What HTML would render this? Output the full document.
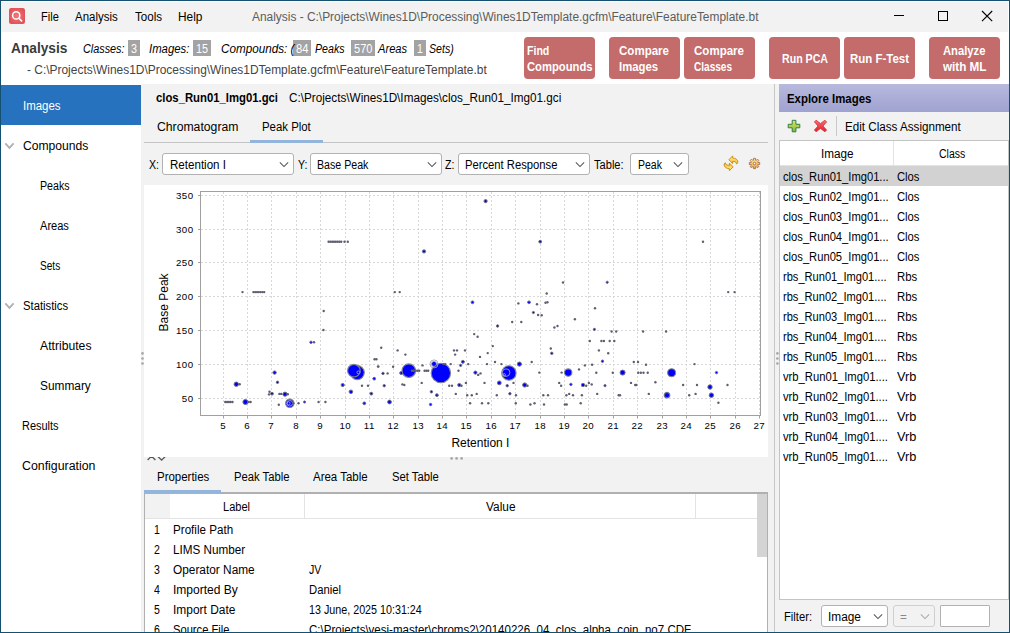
<!DOCTYPE html><html><head><meta charset="utf-8"><title>Analysis</title><style>

html,body{margin:0;padding:0;}
body{width:1010px;height:633px;overflow:hidden;background:#fff;font-family:"Liberation Sans",sans-serif;font-size:12px;position:relative;}
.abs{position:absolute;display:block;}
.t{position:absolute;white-space:nowrap;line-height:16px;height:16px;transform-origin:0 50%;}
.btn{background:#c46b6b;border-radius:4px;}
.badge{background:#a3a3a3;}
.combo{box-sizing:border-box;border:1px solid #b2b2b2;border-radius:3px;background:#fff;}
.combo.dis{background:#f2f2f2;border-color:#cfcfcf;}
.hl{background:#dcdcdc;}

</style></head><body>
<div class="abs" style="left:0;top:0;width:1010px;height:633px;box-sizing:border-box;border:1px solid #14506f;z-index:50;pointer-events:none"></div>
<div class="abs" style="left:1px;top:2px;width:1007px;height:30px;background:#f2f2f2"></div>
<svg class="abs" style="left:9px;top:8px" width="16" height="16" viewBox="0 0 16 16"><defs><radialGradient id="ig" cx="50%" cy="50%" r="65%"><stop offset="0" stop-color="#f27878"/><stop offset="1" stop-color="#dc4a52"/></radialGradient></defs><rect x="0" y="0" width="16" height="16" rx="2.3" fill="url(#ig)"/><circle cx="7.2" cy="7.4" r="3.6" fill="none" stroke="#fff" stroke-width="1.5"/><path d="M9.9 10.2L12.6 12.9" stroke="#fff" stroke-width="1.6" stroke-linecap="round"/></svg>
<svg class="abs" style="left:890px;top:6px" width="110" height="22" viewBox="890 6 110 22"><path d="M894 15.5H904" stroke="#000" stroke-width="1"/><rect x="938.5" y="11.5" width="9" height="9" fill="none" stroke="#000" stroke-width="1"/><path d="M982 11L992.2 21.2M992.2 11L982 21.2" stroke="#000" stroke-width="1.1"/></svg>
<div class="abs btn" style="left:524px;top:37px;width:71px;height:42px"></div>
<div class="abs btn" style="left:609px;top:37px;width:71px;height:42px"></div>
<div class="abs btn" style="left:684px;top:37px;width:71px;height:42px"></div>
<div class="abs btn" style="left:769px;top:37px;width:71px;height:42px"></div>
<div class="abs btn" style="left:844px;top:37px;width:71px;height:42px"></div>
<div class="abs btn" style="left:929px;top:37px;width:71px;height:42px"></div>
<div class="abs badge" style="left:128.0px;top:40px;width:12.0px;height:16px"></div>
<div class="abs badge" style="left:193.0px;top:40px;width:18.0px;height:16px"></div>
<div class="abs badge" style="left:293.0px;top:40px;width:18.0px;height:16px"></div>
<div class="abs badge" style="left:351.0px;top:40px;width:24.0px;height:16px"></div>
<div class="abs badge" style="left:414.0px;top:40px;width:12.0px;height:16px"></div>
<div class="abs" style="left:141px;top:84px;width:868px;height:548px;background:#f2f2f2"></div>
<div class="abs" style="left:1px;top:85px;width:140px;height:40px;background:#2672be"></div>
<svg class="abs" style="left:4px;top:142px" width="11" height="8" viewBox="0 0 11 8"><path d="M1.3 1.4L5.45 5.9L9.6 1.4" fill="none" stroke="#b0b0b0" stroke-width="1.8"/></svg>
<svg class="abs" style="left:4px;top:302px" width="11" height="8" viewBox="0 0 11 8"><path d="M1.3 1.4L5.45 5.9L9.6 1.4" fill="none" stroke="#b0b0b0" stroke-width="1.8"/></svg>
<svg class="abs" style="left:140px;top:350px" width="5" height="18" viewBox="140 350 5 18"><g fill="#a8a8a8"><circle cx="142.5" cy="353.4" r="1.35"/><circle cx="142.5" cy="358.5" r="1.35"/><circle cx="142.5" cy="363.5" r="1.35"/></g></svg>
<div class="abs" style="left:144px;top:142px;width:624px;height:1px;background:#c4c4c4"></div>
<div class="abs" style="left:250px;top:140px;width:73px;height:3px;background:#93b5db"></div>
<div class="abs combo" style="left:162.0px;top:153.0px;width:132.0px;height:22.0px"></div>
<svg class="abs" style="left:278.7px;top:162.2px" width="10" height="6" viewBox="0 0 10 6.5"><path d="M0.5 0.5L5 5L9.5 0.5" fill="none" stroke="#555" stroke-width="1.1"/></svg>
<div class="abs combo" style="left:310.0px;top:153.0px;width:132.0px;height:22.0px"></div>
<svg class="abs" style="left:426.7px;top:162.2px" width="10" height="6" viewBox="0 0 10 6.5"><path d="M0.5 0.5L5 5L9.5 0.5" fill="none" stroke="#555" stroke-width="1.1"/></svg>
<div class="abs combo" style="left:458.0px;top:153.0px;width:132.0px;height:22.0px"></div>
<svg class="abs" style="left:574.5px;top:162.2px" width="10" height="6" viewBox="0 0 10 6.5"><path d="M0.5 0.5L5 5L9.5 0.5" fill="none" stroke="#555" stroke-width="1.1"/></svg>
<div class="abs combo" style="left:630.0px;top:153.0px;width:59.0px;height:22.0px"></div>
<svg class="abs" style="left:673.1px;top:162.2px" width="10" height="6" viewBox="0 0 10 6.5"><path d="M0.5 0.5L5 5L9.5 0.5" fill="none" stroke="#555" stroke-width="1.1"/></svg>
<svg class="abs" style="left:723px;top:155px" width="17" height="17" viewBox="0 0 17 17"><defs><linearGradient id="rg" x1="0" y1="0" x2="0" y2="1"><stop offset="0" stop-color="#fff2a8"/><stop offset="1" stop-color="#f2b722"/></linearGradient></defs><g fill="url(#rg)" stroke="#c88a0c" stroke-width="0.9" stroke-linejoin="round"><path d="M5.9 4.8L9.6 0.9L9.6 3C12.6 3 15 4.6 15 7.6L13.6 8.9C13.2 7.1 11.8 6.3 9.6 6.4L9.6 8.6Z"/><path d="M5.9 4.8L9.6 0.9L9.6 3C12.6 3 15 4.6 15 7.6L13.6 8.9C13.2 7.1 11.8 6.3 9.6 6.4L9.6 8.6Z" transform="rotate(180 8 8.35)"/></g></svg>
<svg class="abs" style="left:748px;top:157px" width="13" height="13" viewBox="0 0 13 13"><defs><linearGradient id="gg" x1="0" y1="0" x2="0" y2="1"><stop offset="0" stop-color="#fff09a"/><stop offset="1" stop-color="#f0a63e"/></linearGradient></defs><path d="M5.60 3.12L5.45 1.31L7.55 1.31L7.40 3.12L8.26 3.47L9.43 2.08L10.92 3.57L9.53 4.74L9.88 5.60L11.69 5.45L11.69 7.55L9.88 7.40L9.53 8.26L10.92 9.43L9.43 10.92L8.26 9.53L7.40 9.88L7.55 11.69L5.45 11.69L5.60 9.88L4.74 9.53L3.57 10.92L2.08 9.43L3.47 8.26L3.12 7.40L1.31 7.55L1.31 5.45L3.12 5.60L3.47 4.74L2.08 3.57L3.57 2.08L4.74 3.47Z" fill="url(#gg)" stroke="#a8705c" stroke-width="0.9" stroke-linejoin="round"/><circle cx="6.5" cy="6.5" r="1.25" fill="#fff" stroke="#7a5a50" stroke-width="0.8"/></svg>
<svg class="abs" style="left:144px;top:185px" width="624" height="272" viewBox="144 185 624 272">
<rect x="144" y="185" width="624" height="272" fill="#fff"/>
<path d="M223.5 192V415M247.5 192V415M271.5 192V415M296.5 192V415M320.5 192V415M345.5 192V415M369.5 192V415M393.5 192V415M418.5 192V415M442.5 192V415M466.5 192V415M491.5 192V415M515.5 192V415M540.5 192V415M564.5 192V415M588.5 192V415M613.5 192V415M637.5 192V415M662.5 192V415M686.5 192V415M710.5 192V415M735.5 192V415M759.5 192V415M201 195.5H760M201 229.5H760M201 262.5H760M201 296.5H760M201 330.5H760M201 364.5H760M201 398.5H760" stroke="#d8d8d8" stroke-width="1" stroke-dasharray="2 2" fill="none"/>
<circle cx="357.3" cy="372.6" r="7.0" fill="#0000ff" stroke="#84848e" stroke-width="1.1"/>
<circle cx="353.9" cy="370.7" r="6.3" fill="#0000ff" stroke="#84848e" stroke-width="1.1"/>
<circle cx="408.8" cy="370.7" r="6.8" fill="#0000ff" stroke="#84848e" stroke-width="1.1"/>
<circle cx="440.9" cy="373.0" r="9.7" fill="#0000ff" stroke="#84848e" stroke-width="1.1"/>
<circle cx="508.9" cy="373.0" r="7.2" fill="#0000ff" stroke="#84848e" stroke-width="1.1"/>
<circle cx="568.2" cy="372.6" r="3.7" fill="#0000ff" stroke="#84848e" stroke-width="1.1"/>
<circle cx="671.6" cy="372.8" r="4.0" fill="#0000ff" stroke="#84848e" stroke-width="1.1"/>
<circle cx="289.8" cy="403.3" r="4.2" fill="#0000ff" stroke="#84848e" stroke-width="1.1"/>
<circle cx="434" cy="363.9" r="2.5" fill="#0000ff"/>
<circle cx="358.5" cy="372.4" r="1.5" fill="none" stroke="#a4a4b4" stroke-width="0.9"/>
<circle cx="434.0" cy="363.9" r="4.0" fill="none" stroke="#a4a4b4" stroke-width="0.9"/>
<circle cx="434.0" cy="363.9" r="2.5" fill="none" stroke="#a4a4b4" stroke-width="0.9"/>
<circle cx="506.1" cy="372.6" r="3.8" fill="none" stroke="#a4a4b4" stroke-width="0.9"/>
<circle cx="504.2" cy="374.9" r="1.3" fill="none" stroke="#a4a4b4" stroke-width="0.9"/>
<circle cx="289.8" cy="403.3" r="2.8" fill="none" stroke="#a4a4b4" stroke-width="0.9"/>
<circle cx="288.5" cy="403.3" r="1.6" fill="none" stroke="#a4a4b4" stroke-width="0.9"/>
<circle cx="667.0" cy="395.2" r="3.1" fill="none" stroke="#a4a4b4" stroke-width="0.9"/>
<circle cx="622.6" cy="372.6" r="1.5" fill="none" stroke="#a4a4b4" stroke-width="0.9"/>
<circle cx="323.7" cy="311.0" r="1.2" fill="#5e5e70"/>
<circle cx="323.4" cy="330.0" r="1.2" fill="#5e5e70"/>
<circle cx="311.0" cy="342.3" r="1.2" fill="#0000ff" stroke="#70707e" stroke-width="1"/>
<circle cx="314.0" cy="342.3" r="1.2" fill="#5e5e70"/>
<circle cx="381.2" cy="347.8" r="1.2" fill="#5e5e70"/>
<circle cx="374.6" cy="359.2" r="1.2" fill="#5e5e70"/>
<circle cx="376.4" cy="359.2" r="1.2" fill="#5e5e70"/>
<circle cx="378.2" cy="366.6" r="1.4" fill="#5e5e70"/>
<circle cx="383.0" cy="373.4" r="1.2" fill="#0000ff" stroke="#70707e" stroke-width="1"/>
<circle cx="374.2" cy="378.7" r="1.4" fill="#0000ff" stroke="#70707e" stroke-width="1"/>
<circle cx="274.6" cy="372.6" r="1.7" fill="#0000ff" stroke="#70707e" stroke-width="1"/>
<circle cx="277.5" cy="382.3" r="1.2" fill="#0000ff" stroke="#70707e" stroke-width="1"/>
<circle cx="236.3" cy="384.2" r="2.2" fill="#0000ff" stroke="#70707e" stroke-width="1"/>
<circle cx="239.7" cy="384.2" r="1.2" fill="#5e5e70"/>
<circle cx="342.7" cy="385.0" r="1.6" fill="#0000ff" stroke="#70707e" stroke-width="1"/>
<circle cx="362.0" cy="385.7" r="1.2" fill="#5e5e70"/>
<circle cx="368.0" cy="385.7" r="1.2" fill="#5e5e70"/>
<circle cx="384.2" cy="385.7" r="1.2" fill="#0000ff" stroke="#70707e" stroke-width="1"/>
<circle cx="350.9" cy="391.8" r="1.8" fill="#0000ff" stroke="#70707e" stroke-width="1"/>
<circle cx="371.3" cy="393.7" r="1.4" fill="#0000ff" stroke="#70707e" stroke-width="1"/>
<circle cx="269.5" cy="391.8" r="1.2" fill="#5e5e70"/>
<circle cx="269.0" cy="394.4" r="1.2" fill="#5e5e70"/>
<circle cx="272.0" cy="393.7" r="1.4" fill="#0000ff" stroke="#70707e" stroke-width="1"/>
<circle cx="279.4" cy="393.9" r="1.2" fill="#5e5e70"/>
<circle cx="281.2" cy="393.9" r="1.2" fill="#5e5e70"/>
<circle cx="285.0" cy="394.2" r="2.1" fill="#0000ff" stroke="#70707e" stroke-width="1"/>
<circle cx="287.8" cy="394.2" r="1.2" fill="#5e5e70"/>
<circle cx="225.3" cy="402.0" r="1.2" fill="#5e5e70"/>
<circle cx="227.1" cy="402.0" r="1.2" fill="#5e5e70"/>
<circle cx="228.9" cy="402.0" r="1.2" fill="#5e5e70"/>
<circle cx="230.7" cy="402.0" r="1.2" fill="#5e5e70"/>
<circle cx="232.5" cy="402.0" r="1.2" fill="#5e5e70"/>
<circle cx="245.4" cy="402.0" r="2.5" fill="#0000ff" stroke="#70707e" stroke-width="1"/>
<circle cx="248.7" cy="402.0" r="1.2" fill="#5e5e70"/>
<circle cx="250.6" cy="402.0" r="1.2" fill="#5e5e70"/>
<circle cx="293.3" cy="403.3" r="1.2" fill="#5e5e70"/>
<circle cx="278.8" cy="404.7" r="1.2" fill="#5e5e70"/>
<circle cx="298.5" cy="403.3" r="1.2" fill="#5e5e70"/>
<circle cx="304.6" cy="402.0" r="1.1" fill="#0000ff" stroke="#70707e" stroke-width="1"/>
<circle cx="318.6" cy="402.0" r="1.2" fill="#5e5e70"/>
<circle cx="325.4" cy="402.0" r="1.2" fill="#5e5e70"/>
<circle cx="364.3" cy="403.3" r="1.4" fill="#0000ff" stroke="#70707e" stroke-width="1"/>
<circle cx="472.5" cy="302.3" r="1.4" fill="#0000ff" stroke="#70707e" stroke-width="1"/>
<circle cx="518.4" cy="303.4" r="1.2" fill="#5e5e70"/>
<circle cx="529.0" cy="302.3" r="1.4" fill="#0000ff" stroke="#70707e" stroke-width="1"/>
<circle cx="537.0" cy="304.2" r="1.2" fill="#5e5e70"/>
<circle cx="545.5" cy="302.8" r="1.2" fill="#5e5e70"/>
<circle cx="547.4" cy="302.3" r="1.2" fill="#5e5e70"/>
<circle cx="533.4" cy="312.5" r="1.1" fill="#0000ff" stroke="#70707e" stroke-width="1"/>
<circle cx="538.1" cy="315.0" r="1.2" fill="#5e5e70"/>
<circle cx="541.7" cy="315.2" r="1.2" fill="#5e5e70"/>
<circle cx="512.2" cy="322.0" r="1.2" fill="#5e5e70"/>
<circle cx="521.3" cy="322.0" r="1.2" fill="#5e5e70"/>
<circle cx="497.6" cy="326.0" r="1.2" fill="#0000ff" stroke="#70707e" stroke-width="1"/>
<circle cx="554.4" cy="327.5" r="1.2" fill="#5e5e70"/>
<circle cx="557.5" cy="326.0" r="1.2" fill="#5e5e70"/>
<circle cx="474.2" cy="334.1" r="1.2" fill="#5e5e70"/>
<circle cx="477.6" cy="336.8" r="1.2" fill="#5e5e70"/>
<circle cx="492.8" cy="346.1" r="1.2" fill="#5e5e70"/>
<circle cx="397.6" cy="350.4" r="1.2" fill="#5e5e70"/>
<circle cx="405.4" cy="354.6" r="1.2" fill="#5e5e70"/>
<circle cx="454.0" cy="350.4" r="1.2" fill="#5e5e70"/>
<circle cx="457.0" cy="350.4" r="1.2" fill="#5e5e70"/>
<circle cx="465.0" cy="350.4" r="1.2" fill="#5e5e70"/>
<circle cx="455.1" cy="354.6" r="1.2" fill="#5e5e70"/>
<circle cx="487.7" cy="353.1" r="1.2" fill="#5e5e70"/>
<circle cx="480.0" cy="356.9" r="1.2" fill="#5e5e70"/>
<circle cx="550.8" cy="348.5" r="1.2" fill="#5e5e70"/>
<circle cx="551.8" cy="353.3" r="1.2" fill="#0000ff" stroke="#70707e" stroke-width="1"/>
<circle cx="462.9" cy="361.8" r="1.5" fill="#0000ff" stroke="#70707e" stroke-width="1"/>
<circle cx="468.2" cy="364.1" r="1.2" fill="#5e5e70"/>
<circle cx="460.6" cy="365.4" r="1.1" fill="#0000ff" stroke="#70707e" stroke-width="1"/>
<circle cx="487.0" cy="364.1" r="1.2" fill="#5e5e70"/>
<circle cx="495.0" cy="362.0" r="1.2" fill="#5e5e70"/>
<circle cx="501.4" cy="364.1" r="1.2" fill="#5e5e70"/>
<circle cx="519.4" cy="364.1" r="2.1" fill="#0000ff" stroke="#70707e" stroke-width="1"/>
<circle cx="531.7" cy="362.0" r="1.2" fill="#5e5e70"/>
<circle cx="443.5" cy="364.1" r="1.2" fill="#5e5e70"/>
<circle cx="445.3" cy="364.1" r="1.2" fill="#5e5e70"/>
<circle cx="450.7" cy="364.1" r="1.2" fill="#5e5e70"/>
<circle cx="422.5" cy="365.4" r="1.2" fill="#5e5e70"/>
<circle cx="393.1" cy="366.7" r="1.2" fill="#5e5e70"/>
<circle cx="412.0" cy="370.7" r="1.2" fill="#5e5e70"/>
<circle cx="413.8" cy="370.7" r="1.2" fill="#5e5e70"/>
<circle cx="415.6" cy="370.7" r="1.2" fill="#5e5e70"/>
<circle cx="417.4" cy="370.7" r="1.2" fill="#5e5e70"/>
<circle cx="419.2" cy="370.7" r="1.2" fill="#5e5e70"/>
<circle cx="424.6" cy="370.7" r="1.2" fill="#5e5e70"/>
<circle cx="426.4" cy="370.7" r="1.2" fill="#5e5e70"/>
<circle cx="428.2" cy="370.7" r="1.2" fill="#5e5e70"/>
<circle cx="458.5" cy="370.7" r="1.2" fill="#5e5e70"/>
<circle cx="387.6" cy="373.4" r="1.2" fill="#5e5e70"/>
<circle cx="475.4" cy="372.6" r="1.6" fill="#0000ff" stroke="#70707e" stroke-width="1"/>
<circle cx="401.2" cy="373.0" r="1.5" fill="#0000ff" stroke="#70707e" stroke-width="1"/>
<circle cx="478.2" cy="374.9" r="1.2" fill="#5e5e70"/>
<circle cx="480.5" cy="373.4" r="1.2" fill="#5e5e70"/>
<circle cx="539.3" cy="372.6" r="1.2" fill="#5e5e70"/>
<circle cx="561.6" cy="372.6" r="1.2" fill="#5e5e70"/>
<circle cx="499.3" cy="382.9" r="1.9" fill="#0000ff" stroke="#70707e" stroke-width="1"/>
<circle cx="513.5" cy="382.9" r="1.2" fill="#5e5e70"/>
<circle cx="484.5" cy="382.9" r="1.2" fill="#5e5e70"/>
<circle cx="465.9" cy="382.9" r="1.2" fill="#5e5e70"/>
<circle cx="421.7" cy="382.9" r="1.2" fill="#5e5e70"/>
<circle cx="402.4" cy="384.4" r="1.2" fill="#5e5e70"/>
<circle cx="404.3" cy="385.0" r="1.2" fill="#5e5e70"/>
<circle cx="449.2" cy="385.7" r="1.2" fill="#5e5e70"/>
<circle cx="452.0" cy="385.7" r="1.2" fill="#5e5e70"/>
<circle cx="459.3" cy="385.0" r="1.6" fill="#0000ff" stroke="#70707e" stroke-width="1"/>
<circle cx="461.5" cy="385.7" r="1.2" fill="#5e5e70"/>
<circle cx="507.2" cy="385.7" r="1.2" fill="#0000ff" stroke="#70707e" stroke-width="1"/>
<circle cx="524.7" cy="385.0" r="2.1" fill="#0000ff" stroke="#70707e" stroke-width="1"/>
<circle cx="527.5" cy="385.7" r="1.2" fill="#5e5e70"/>
<circle cx="559.2" cy="382.9" r="1.2" fill="#5e5e70"/>
<circle cx="561.1" cy="385.7" r="1.2" fill="#5e5e70"/>
<circle cx="431.4" cy="391.8" r="1.2" fill="#0000ff" stroke="#70707e" stroke-width="1"/>
<circle cx="436.9" cy="395.2" r="1.4" fill="#0000ff" stroke="#70707e" stroke-width="1"/>
<circle cx="455.8" cy="393.9" r="1.2" fill="#5e5e70"/>
<circle cx="467.2" cy="395.2" r="1.2" fill="#5e5e70"/>
<circle cx="471.8" cy="395.2" r="1.2" fill="#5e5e70"/>
<circle cx="476.7" cy="393.9" r="1.2" fill="#5e5e70"/>
<circle cx="496.8" cy="395.2" r="1.2" fill="#5e5e70"/>
<circle cx="509.9" cy="393.7" r="1.2" fill="#0000ff" stroke="#70707e" stroke-width="1"/>
<circle cx="516.0" cy="395.2" r="1.2" fill="#5e5e70"/>
<circle cx="543.3" cy="395.2" r="1.2" fill="#5e5e70"/>
<circle cx="548.0" cy="395.2" r="1.2" fill="#5e5e70"/>
<circle cx="566.4" cy="395.2" r="1.2" fill="#5e5e70"/>
<circle cx="569.2" cy="393.9" r="1.2" fill="#5e5e70"/>
<circle cx="389.5" cy="402.0" r="1.9" fill="#0000ff" stroke="#70707e" stroke-width="1"/>
<circle cx="430.6" cy="404.5" r="1.2" fill="#0000ff" stroke="#70707e" stroke-width="1"/>
<circle cx="470.1" cy="403.3" r="1.2" fill="#5e5e70"/>
<circle cx="482.0" cy="403.3" r="1.2" fill="#5e5e70"/>
<circle cx="488.3" cy="403.3" r="1.2" fill="#5e5e70"/>
<circle cx="515.8" cy="403.3" r="1.2" fill="#5e5e70"/>
<circle cx="530.4" cy="404.5" r="1.2" fill="#5e5e70"/>
<circle cx="534.5" cy="403.3" r="1.2" fill="#5e5e70"/>
<circle cx="544.0" cy="404.5" r="1.2" fill="#5e5e70"/>
<circle cx="564.9" cy="404.5" r="1.2" fill="#5e5e70"/>
<circle cx="566.7" cy="404.5" r="1.2" fill="#5e5e70"/>
<circle cx="595.0" cy="308.3" r="1.2" fill="#5e5e70"/>
<circle cx="574.9" cy="319.2" r="1.2" fill="#5e5e70"/>
<circle cx="594.4" cy="329.4" r="1.1" fill="#0000ff" stroke="#70707e" stroke-width="1"/>
<circle cx="611.6" cy="331.5" r="1.2" fill="#5e5e70"/>
<circle cx="616.2" cy="331.5" r="1.2" fill="#5e5e70"/>
<circle cx="643.1" cy="331.5" r="1.2" fill="#5e5e70"/>
<circle cx="666.1" cy="331.5" r="1.2" fill="#5e5e70"/>
<circle cx="589.8" cy="341.0" r="1.2" fill="#5e5e70"/>
<circle cx="601.4" cy="341.0" r="1.2" fill="#5e5e70"/>
<circle cx="603.9" cy="341.0" r="1.2" fill="#5e5e70"/>
<circle cx="609.7" cy="341.0" r="1.2" fill="#5e5e70"/>
<circle cx="614.3" cy="341.0" r="1.2" fill="#5e5e70"/>
<circle cx="598.9" cy="350.4" r="1.2" fill="#5e5e70"/>
<circle cx="608.2" cy="353.3" r="1.2" fill="#5e5e70"/>
<circle cx="602.5" cy="361.2" r="1.2" fill="#0000ff" stroke="#70707e" stroke-width="1"/>
<circle cx="633.8" cy="362.0" r="1.2" fill="#5e5e70"/>
<circle cx="638.0" cy="362.0" r="1.2" fill="#5e5e70"/>
<circle cx="646.0" cy="364.8" r="1.2" fill="#5e5e70"/>
<circle cx="694.5" cy="364.1" r="1.2" fill="#5e5e70"/>
<circle cx="584.9" cy="365.4" r="1.2" fill="#5e5e70"/>
<circle cx="592.1" cy="364.8" r="1.2" fill="#5e5e70"/>
<circle cx="579.0" cy="369.4" r="1.2" fill="#5e5e70"/>
<circle cx="596.3" cy="372.8" r="1.2" fill="#5e5e70"/>
<circle cx="612.8" cy="372.8" r="1.2" fill="#5e5e70"/>
<circle cx="622.6" cy="372.6" r="2.5" fill="#0000ff" stroke="#70707e" stroke-width="1"/>
<circle cx="638.2" cy="372.8" r="1.2" fill="#5e5e70"/>
<circle cx="640.8" cy="372.8" r="1.2" fill="#5e5e70"/>
<circle cx="643.5" cy="372.8" r="1.2" fill="#5e5e70"/>
<circle cx="647.7" cy="372.8" r="1.2" fill="#5e5e70"/>
<circle cx="716.5" cy="372.6" r="1.2" fill="#0000ff" stroke="#70707e" stroke-width="1"/>
<circle cx="570.9" cy="384.4" r="1.2" fill="#0000ff" stroke="#70707e" stroke-width="1"/>
<circle cx="583.0" cy="385.0" r="1.7" fill="#0000ff" stroke="#70707e" stroke-width="1"/>
<circle cx="586.2" cy="385.7" r="1.2" fill="#5e5e70"/>
<circle cx="588.9" cy="382.9" r="1.2" fill="#5e5e70"/>
<circle cx="591.7" cy="384.4" r="1.2" fill="#5e5e70"/>
<circle cx="605.0" cy="385.7" r="1.1" fill="#0000ff" stroke="#70707e" stroke-width="1"/>
<circle cx="631.0" cy="382.9" r="1.2" fill="#5e5e70"/>
<circle cx="635.2" cy="385.0" r="1.2" fill="#5e5e70"/>
<circle cx="636.3" cy="385.0" r="1.2" fill="#5e5e70"/>
<circle cx="655.4" cy="382.3" r="1.2" fill="#5e5e70"/>
<circle cx="683.1" cy="385.0" r="1.2" fill="#5e5e70"/>
<circle cx="697.0" cy="385.0" r="1.2" fill="#5e5e70"/>
<circle cx="710.0" cy="387.0" r="2.2" fill="#0000ff" stroke="#70707e" stroke-width="1"/>
<circle cx="727.5" cy="385.0" r="1.2" fill="#5e5e70"/>
<circle cx="573.0" cy="395.2" r="1.2" fill="#5e5e70"/>
<circle cx="581.9" cy="395.2" r="1.2" fill="#5e5e70"/>
<circle cx="597.2" cy="393.9" r="1.2" fill="#5e5e70"/>
<circle cx="618.7" cy="395.2" r="1.2" fill="#5e5e70"/>
<circle cx="620.0" cy="395.2" r="1.2" fill="#5e5e70"/>
<circle cx="648.8" cy="393.9" r="1.2" fill="#5e5e70"/>
<circle cx="667.0" cy="395.2" r="2.6" fill="#0000ff" stroke="#70707e" stroke-width="1"/>
<circle cx="689.2" cy="395.2" r="1.2" fill="#5e5e70"/>
<circle cx="695.6" cy="393.9" r="1.2" fill="#5e5e70"/>
<circle cx="711.4" cy="395.2" r="2.2" fill="#0000ff" stroke="#70707e" stroke-width="1"/>
<circle cx="718.4" cy="402.8" r="1.2" fill="#5e5e70"/>
<circle cx="580.7" cy="403.3" r="1.2" fill="#5e5e70"/>
<circle cx="485.6" cy="201.1" r="1.6" fill="#0000ff" stroke="#70707e" stroke-width="1"/>
<circle cx="540.2" cy="241.7" r="1.4" fill="#0000ff" stroke="#70707e" stroke-width="1"/>
<circle cx="424.0" cy="251.4" r="1.6" fill="#0000ff" stroke="#70707e" stroke-width="1"/>
<circle cx="394.8" cy="292.1" r="1.2" fill="#5e5e70"/>
<circle cx="399.7" cy="292.1" r="1.2" fill="#5e5e70"/>
<circle cx="563.0" cy="282.5" r="1.2" fill="#5e5e70"/>
<circle cx="546.7" cy="293.5" r="1.2" fill="#5e5e70"/>
<circle cx="703.0" cy="241.8" r="1.2" fill="#5e5e70"/>
<circle cx="607.2" cy="282.3" r="1.1" fill="#0000ff" stroke="#70707e" stroke-width="1"/>
<circle cx="728.2" cy="292.1" r="1.2" fill="#5e5e70"/>
<circle cx="734.6" cy="292.1" r="1.2" fill="#5e5e70"/>
<circle cx="328.6" cy="241.8" r="1.2" fill="#5e5e70"/>
<circle cx="330.4" cy="241.8" r="1.2" fill="#5e5e70"/>
<circle cx="332.2" cy="241.8" r="1.2" fill="#5e5e70"/>
<circle cx="334.0" cy="241.8" r="1.2" fill="#5e5e70"/>
<circle cx="335.8" cy="241.8" r="1.2" fill="#5e5e70"/>
<circle cx="337.6" cy="241.8" r="1.2" fill="#5e5e70"/>
<circle cx="339.4" cy="241.8" r="1.2" fill="#5e5e70"/>
<circle cx="341.2" cy="241.8" r="1.2" fill="#5e5e70"/>
<circle cx="344.5" cy="241.8" r="1.2" fill="#5e5e70"/>
<circle cx="347.8" cy="241.8" r="1.2" fill="#5e5e70"/>
<circle cx="242.5" cy="292.1" r="1.2" fill="#5e5e70"/>
<circle cx="253.4" cy="292.1" r="1.2" fill="#5e5e70"/>
<circle cx="255.2" cy="292.1" r="1.2" fill="#5e5e70"/>
<circle cx="257.0" cy="292.1" r="1.2" fill="#5e5e70"/>
<circle cx="258.8" cy="292.1" r="1.2" fill="#5e5e70"/>
<circle cx="260.6" cy="292.1" r="1.2" fill="#5e5e70"/>
<circle cx="262.4" cy="292.1" r="1.2" fill="#5e5e70"/>
<circle cx="264.2" cy="292.1" r="1.2" fill="#5e5e70"/>
<rect x="200.5" y="191.5" width="560" height="224" fill="none" stroke="#a0a0a0" stroke-width="1"/>
<path d="M223.5 415.5v3M247.5 415.5v3M271.5 415.5v3M296.5 415.5v3M320.5 415.5v3M345.5 415.5v3M369.5 415.5v3M393.5 415.5v3M418.5 415.5v3M442.5 415.5v3M466.5 415.5v3M491.5 415.5v3M515.5 415.5v3M540.5 415.5v3M564.5 415.5v3M588.5 415.5v3M613.5 415.5v3M637.5 415.5v3M662.5 415.5v3M686.5 415.5v3M710.5 415.5v3M735.5 415.5v3M759.5 415.5v3M198 195.5h3M198 229.5h3M198 262.5h3M198 296.5h3M198 330.5h3M198 364.5h3M198 398.5h3" stroke="#a0a0a0" stroke-width="1" fill="none"/>
<g font-family='"Liberation Sans", sans-serif' font-size="9.7" fill="#000" letter-spacing="0.5">
<text x="223.3" y="429" text-anchor="middle">5</text>
<text x="247.3" y="429" text-anchor="middle">6</text>
<text x="271.3" y="429" text-anchor="middle">7</text>
<text x="296.3" y="429" text-anchor="middle">8</text>
<text x="320.3" y="429" text-anchor="middle">9</text>
<text x="345.3" y="429" text-anchor="middle">10</text>
<text x="369.3" y="429" text-anchor="middle">11</text>
<text x="393.3" y="429" text-anchor="middle">12</text>
<text x="418.3" y="429" text-anchor="middle">13</text>
<text x="442.3" y="429" text-anchor="middle">14</text>
<text x="466.3" y="429" text-anchor="middle">15</text>
<text x="491.3" y="429" text-anchor="middle">16</text>
<text x="515.3" y="429" text-anchor="middle">17</text>
<text x="540.3" y="429" text-anchor="middle">18</text>
<text x="564.3" y="429" text-anchor="middle">19</text>
<text x="588.3" y="429" text-anchor="middle">20</text>
<text x="613.3" y="429" text-anchor="middle">21</text>
<text x="637.3" y="429" text-anchor="middle">22</text>
<text x="662.3" y="429" text-anchor="middle">23</text>
<text x="686.3" y="429" text-anchor="middle">24</text>
<text x="710.3" y="429" text-anchor="middle">25</text>
<text x="735.3" y="429" text-anchor="middle">26</text>
<text x="759.3" y="429" text-anchor="middle">27</text>
<text x="193.6" y="199.0" text-anchor="end">350</text>
<text x="193.6" y="233.0" text-anchor="end">300</text>
<text x="193.6" y="266.0" text-anchor="end">250</text>
<text x="193.6" y="300.0" text-anchor="end">200</text>
<text x="193.6" y="334.0" text-anchor="end">150</text>
<text x="193.6" y="368.0" text-anchor="end">100</text>
<text x="193.6" y="402.0" text-anchor="end">50</text>
</g>
<g font-family='"Liberation Sans", sans-serif' font-size="12" fill="#000">
<text x="480.4" y="447.2" text-anchor="middle">Retention I</text>
<text transform="translate(168.3 302.4) rotate(-90)" text-anchor="middle">Base Peak</text>
</g>
</svg>
<svg class="abs" style="left:146px;top:457px;overflow:hidden" width="22" height="5" viewBox="146 457 22 5"><path d="M147.6 460L151.5 456.1L155.4 460M157.8 456.4L161.6 460.1L165.4 456.4" fill="none" stroke="#555" stroke-width="1.3"/></svg>
<svg class="abs" style="left:449px;top:456px" width="16" height="5" viewBox="449 456 16 5"><g fill="#a8a8a8"><circle cx="451.6" cy="458.4" r="1.35"/><circle cx="456.6" cy="458.4" r="1.35"/><circle cx="461.6" cy="458.4" r="1.35"/></g></svg>
<div class="abs" style="left:144px;top:490px;width:77px;height:3px;background:#93b5db;z-index:5"></div>
<div class="abs" style="left:144px;top:492px;width:624px;height:141px;background:#fff;box-sizing:border-box;border:1px solid #b0b0b0;border-top:2px solid #b0b0b0"></div>
<div class="abs" style="left:145px;top:494px;width:25px;height:24px;background:#f2f2f2"></div>
<div class="abs" style="left:145px;top:518px;width:612px;height:1px;background:#e3e3e3"></div>
<div class="abs" style="left:304px;top:494px;width:1px;height:24px;background:#e3e3e3"></div>
<div class="abs" style="left:695px;top:494px;width:1px;height:24px;background:#e3e3e3"></div>
<div class="abs" style="left:757px;top:494px;width:10px;height:63px;background:#d4d4d4"></div>
<div class="abs" style="left:774px;top:84px;width:1px;height:548px;background:#c6c6c6"></div>
<svg class="abs" style="left:775px;top:350px" width="4" height="18" viewBox="775 350 4 18"><g fill="#a8a8a8"><circle cx="777.4" cy="353.4" r="1.35"/><circle cx="777.4" cy="358.5" r="1.35"/><circle cx="777.4" cy="363.5" r="1.35"/></g></svg>
<div class="abs" style="left:779px;top:84px;width:230px;height:28px;background:linear-gradient(#b7b9dd,#a0a2d0)"></div>
<svg class="abs" style="left:787px;top:119px" width="14" height="14" viewBox="0 0 14 14"><defs><linearGradient id="pg" x1="0" y1="0" x2="0" y2="1"><stop offset="0" stop-color="#e4e860"/><stop offset="1" stop-color="#86b43c"/></linearGradient></defs><path d="M5.2 1.3H8.9V5.3H12.8V8.8H8.9V12.8H5.2V8.8H1.2V5.3H5.2Z" fill="url(#pg)" stroke="#2f7d46" stroke-width="1" stroke-linejoin="round"/></svg>
<svg class="abs" style="left:813px;top:119px" width="15" height="14" viewBox="0 0 15 14"><defs><linearGradient id="xg" x1="0" y1="0" x2="0" y2="1"><stop offset="0" stop-color="#fa7074"/><stop offset="1" stop-color="#e01c2c"/></linearGradient></defs><path d="M3.1 1.2L7.5 4.6L11.9 1.2L13.6 2.9L10 7L13.6 11.1L11.9 12.8L7.5 9.4L3.1 12.8L1.4 11.1L5 7L1.4 2.9Z" fill="url(#xg)" stroke="#d03434" stroke-width="0.8" stroke-linejoin="round"/></svg>
<div class="abs" style="left:836px;top:116px;width:1px;height:20px;background:#cacaca"></div>
<div class="abs" style="left:779px;top:140px;width:230px;height:460px;background:#fff;box-sizing:border-box;border:1px solid #c4c4c4"></div>
<div class="abs" style="left:780px;top:165px;width:228px;height:1px;background:#e3e3e3"></div>
<div class="abs" style="left:893px;top:141px;width:1px;height:24px;background:#e3e3e3"></div>
<div class="abs" style="left:780px;top:166px;width:228px;height:20px;background:#d2d2d2"></div>
<div class="abs combo" style="left:821.0px;top:605.0px;width:67.0px;height:22.0px"></div>
<svg class="abs" style="left:873.0px;top:613.8px" width="10" height="6" viewBox="0 0 10 6.5"><path d="M0.5 0.5L5 5L9.5 0.5" fill="none" stroke="#555" stroke-width="1.1"/></svg>
<div class="abs combo dis" style="left:893.0px;top:605.0px;width:42.0px;height:22.0px"></div>
<svg class="abs" style="left:920.0px;top:613.8px" width="10" height="6" viewBox="0 0 10 6.5"><path d="M0.5 0.5L5 5L9.5 0.5" fill="none" stroke="#aaa" stroke-width="1.1"/></svg>
<div class="abs combo"  style="left:940.0px;top:605.0px;width:50.0px;height:22.0px;border-radius:1px"></div>
<span class="t" style="left:41.20px;top:9.00px;font-size:12px;transform:scaleX(0.9202);">File</span>
<span class="t" style="left:75.20px;top:9.00px;font-size:12px;transform:scaleX(0.9555);">Analysis</span>
<span class="t" style="left:134.60px;top:9.00px;font-size:12px;transform:scaleX(0.9637);">Tools</span>
<span class="t" style="left:178.40px;top:9.00px;font-size:12px;transform:scaleX(0.9884);">Help</span>
<span class="t" style="left:252.00px;top:9.00px;font-size:12px;color:#5c5c5c;transform:scaleX(0.9927);">Analysis - C:\Projects\Wines1D\Processing\Wines1DTemplate.gcfm\Feature\FeatureTemplate.bt</span>
<span class="t" style="left:11.00px;top:40.00px;font-size:14px;font-weight:bold;color:#3a3a3a;transform:scaleX(0.9793);">Analysis</span>
<span class="t" style="left:83.10px;top:41.00px;font-size:12px;font-style:italic;transform:scaleX(0.9019);">Classes:</span>
<span class="t" style="left:131.00px;top:41.00px;font-size:12px;color:#fff;transform:scaleX(0.8972);">3</span>
<span class="t" style="left:149.30px;top:41.00px;font-size:12px;font-style:italic;transform:scaleX(0.9464);">Images:</span>
<span class="t" style="left:196.00px;top:41.00px;font-size:12px;color:#fff;transform:scaleX(0.8982);">15</span>
<span class="t" style="left:220.60px;top:41.00px;font-size:12px;font-style:italic;transform:scaleX(0.9738);">Compounds: (</span>
<span class="t" style="left:296.00px;top:41.00px;font-size:12px;color:#fff;transform:scaleX(0.9357);">84</span>
<span class="t" style="left:314.70px;top:41.00px;font-size:12px;font-style:italic;transform:scaleX(0.8843);">Peaks</span>
<span class="t" style="left:354.00px;top:41.00px;font-size:12px;color:#fff;transform:scaleX(0.9236);">570</span>
<span class="t" style="left:378.40px;top:41.00px;font-size:12px;font-style:italic;transform:scaleX(0.9280);">Areas</span>
<span class="t" style="left:417.30px;top:41.00px;font-size:12px;color:#fff;transform:scaleX(0.8800);">1</span>
<span class="t" style="left:428.80px;top:41.00px;font-size:12px;font-style:italic;transform:scaleX(0.8817);">Sets)</span>
<span class="t" style="left:27.00px;top:62.00px;font-size:12px;color:#444;transform:scaleX(0.9948);">- C:\Projects\Wines1D\Processing\Wines1DTemplate.gcfm\Feature\FeatureTemplate.bt</span>
<span class="t" style="left:527.20px;top:43.00px;font-size:12px;font-weight:bold;color:#fff;transform:scaleX(0.8804);">Find</span>
<span class="t" style="left:527.20px;top:59.00px;font-size:12px;font-weight:bold;color:#fff;transform:scaleX(0.9371);">Compounds</span>
<span class="t" style="left:619.00px;top:43.00px;font-size:12px;font-weight:bold;color:#fff;transform:scaleX(0.9612);">Compare</span>
<span class="t" style="left:619.00px;top:59.00px;font-size:12px;font-weight:bold;color:#fff;transform:scaleX(0.9430);">Images</span>
<span class="t" style="left:694.00px;top:43.00px;font-size:12px;font-weight:bold;color:#fff;transform:scaleX(0.9612);">Compare</span>
<span class="t" style="left:694.00px;top:59.00px;font-size:12px;font-weight:bold;color:#fff;transform:scaleX(0.8375);">Classes</span>
<span class="t" style="left:781.50px;top:51.00px;font-size:12px;font-weight:bold;color:#fff;transform:scaleX(0.8846);">Run PCA</span>
<span class="t" style="left:849.50px;top:51.00px;font-size:12px;font-weight:bold;color:#fff;transform:scaleX(0.9550);">Run F-Test</span>
<span class="t" style="left:942.50px;top:43.00px;font-size:12px;font-weight:bold;color:#fff;transform:scaleX(0.9370);">Analyze</span>
<span class="t" style="left:942.50px;top:59.00px;font-size:12px;font-weight:bold;color:#fff;transform:scaleX(0.9741);">with ML</span>
<span class="t" style="left:22.60px;top:98.00px;font-size:12px;color:#fff;transform:scaleX(0.9553);">Images</span>
<span class="t" style="left:22.60px;top:138.00px;font-size:12px;transform:scaleX(1.0105);">Compounds</span>
<span class="t" style="left:40.40px;top:178.00px;font-size:12px;transform:scaleX(0.8873);">Peaks</span>
<span class="t" style="left:40.40px;top:218.00px;font-size:12px;transform:scaleX(0.9216);">Areas</span>
<span class="t" style="left:40.40px;top:258.00px;font-size:12px;transform:scaleX(0.8411);">Sets</span>
<span class="t" style="left:22.60px;top:298.00px;font-size:12px;transform:scaleX(0.9393);">Statistics</span>
<span class="t" style="left:40.30px;top:338.00px;font-size:12px;transform:scaleX(1.0157);">Attributes</span>
<span class="t" style="left:40.30px;top:378.00px;font-size:12px;transform:scaleX(0.9894);">Summary</span>
<span class="t" style="left:22.30px;top:418.00px;font-size:12px;transform:scaleX(0.9121);">Results</span>
<span class="t" style="left:22.30px;top:458.00px;font-size:12px;transform:scaleX(1.0281);">Configuration</span>
<span class="t" style="left:156.10px;top:90.00px;font-size:12px;font-weight:bold;transform:scaleX(0.9429);">clos_Run01_Img01.gci</span>
<span class="t" style="left:289.40px;top:90.00px;font-size:12px;transform:scaleX(0.9767);">C:\Projects\Wines1D\Images\clos_Run01_Img01.gci</span>
<span class="t" style="left:156.60px;top:119.00px;font-size:12px;transform:scaleX(1.0171);">Chromatogram</span>
<span class="t" style="left:262.40px;top:119.00px;font-size:12px;transform:scaleX(0.9499);">Peak Plot</span>
<span class="t" style="left:148.90px;top:157.00px;font-size:12px;transform:scaleX(0.8800);">X:</span>
<span class="t" style="left:169.50px;top:157.00px;font-size:12px;transform:scaleX(0.9647);">Retention I</span>
<span class="t" style="left:297.50px;top:157.00px;font-size:12px;transform:scaleX(0.8800);">Y:</span>
<span class="t" style="left:317.40px;top:157.00px;font-size:12px;transform:scaleX(0.8855);">Base Peak</span>
<span class="t" style="left:445.00px;top:157.00px;font-size:12px;transform:scaleX(0.8800);">Z:</span>
<span class="t" style="left:465.30px;top:157.00px;font-size:12px;transform:scaleX(0.9369);">Percent Response</span>
<span class="t" style="left:593.90px;top:157.00px;font-size:12px;transform:scaleX(0.9241);">Table:</span>
<span class="t" style="left:637.60px;top:157.00px;font-size:12px;transform:scaleX(0.8736);">Peak</span>
<span class="t" style="left:156.50px;top:469.00px;font-size:12px;transform:scaleX(0.9561);">Properties</span>
<span class="t" style="left:233.50px;top:469.00px;font-size:12px;transform:scaleX(0.9382);">Peak Table</span>
<span class="t" style="left:313.30px;top:469.00px;font-size:12px;transform:scaleX(0.9570);">Area Table</span>
<span class="t" style="left:392.00px;top:469.00px;font-size:12px;transform:scaleX(0.9392);">Set Table</span>
<span class="t" style="left:223.30px;top:499.00px;font-size:12px;transform:scaleX(0.9191);">Label</span>
<span class="t" style="left:486.00px;top:499.00px;font-size:12px;transform:scaleX(0.9895);">Value</span>
<span class="t" style="left:154.30px;top:522.00px;font-size:12px;transform:scaleX(0.8800);">1</span>
<span class="t" style="left:173.30px;top:522.00px;font-size:12px;transform:scaleX(0.9702);">Profile Path</span>
<span class="t" style="left:154.30px;top:542.00px;font-size:12px;transform:scaleX(0.8800);">2</span>
<span class="t" style="left:173.30px;top:542.00px;font-size:12px;transform:scaleX(0.9753);">LIMS Number</span>
<span class="t" style="left:154.30px;top:562.00px;font-size:12px;transform:scaleX(0.8800);">3</span>
<span class="t" style="left:173.30px;top:562.00px;font-size:12px;transform:scaleX(0.9879);">Operator Name</span>
<span class="t" style="left:308.60px;top:562.00px;font-size:12px;transform:scaleX(0.8800);">JV</span>
<span class="t" style="left:154.30px;top:582.00px;font-size:12px;transform:scaleX(0.8800);">4</span>
<span class="t" style="left:173.30px;top:582.00px;font-size:12px;transform:scaleX(1.0030);">Imported By</span>
<span class="t" style="left:308.60px;top:582.00px;font-size:12px;transform:scaleX(0.9403);">Daniel</span>
<span class="t" style="left:154.30px;top:602.00px;font-size:12px;transform:scaleX(0.8800);">5</span>
<span class="t" style="left:173.30px;top:602.00px;font-size:12px;transform:scaleX(0.9952);">Import Date</span>
<span class="t" style="left:308.60px;top:602.00px;font-size:12px;transform:scaleX(0.8944);">13 June, 2025 10:31:24</span>
<span class="t" style="left:154.30px;top:622.00px;font-size:12px;transform:scaleX(0.8800);">6</span>
<span class="t" style="left:173.30px;top:622.00px;font-size:12px;transform:scaleX(0.9291);">Source File</span>
<span class="t" style="left:308.60px;top:622.00px;font-size:12px;transform:scaleX(0.9611);">C:\Projects\vesi-master\chroms2\20140226_04_clos_alpha_coin_no7.CDF</span>
<span class="t" style="left:787.30px;top:91.00px;font-size:12px;font-weight:bold;transform:scaleX(0.9513);">Explore Images</span>
<span class="t" style="left:845.20px;top:119.00px;font-size:12px;transform:scaleX(0.9699);">Edit Class Assignment</span>
<span class="t" style="left:821.40px;top:146.00px;font-size:12px;transform:scaleX(0.9772);">Image</span>
<span class="t" style="left:938.50px;top:146.00px;font-size:12px;transform:scaleX(0.8762);">Class</span>
<span class="t" style="left:783.30px;top:169.00px;font-size:12px;transform:scaleX(0.9320);">clos_Run01_Img01...</span>
<span class="t" style="left:897.30px;top:169.00px;font-size:12px;transform:scaleX(0.9369);">Clos</span>
<span class="t" style="left:783.30px;top:189.00px;font-size:12px;transform:scaleX(0.9320);">clos_Run02_Img01...</span>
<span class="t" style="left:897.30px;top:189.00px;font-size:12px;transform:scaleX(0.9369);">Clos</span>
<span class="t" style="left:783.30px;top:209.00px;font-size:12px;transform:scaleX(0.9320);">clos_Run03_Img01...</span>
<span class="t" style="left:897.30px;top:209.00px;font-size:12px;transform:scaleX(0.9369);">Clos</span>
<span class="t" style="left:783.30px;top:229.00px;font-size:12px;transform:scaleX(0.9320);">clos_Run04_Img01...</span>
<span class="t" style="left:897.30px;top:229.00px;font-size:12px;transform:scaleX(0.9369);">Clos</span>
<span class="t" style="left:783.30px;top:249.00px;font-size:12px;transform:scaleX(0.9320);">clos_Run05_Img01...</span>
<span class="t" style="left:897.30px;top:249.00px;font-size:12px;transform:scaleX(0.9369);">Clos</span>
<span class="t" style="left:783.30px;top:269.00px;font-size:12px;transform:scaleX(0.9244);">rbs_Run01_Img01....</span>
<span class="t" style="left:897.30px;top:269.00px;font-size:12px;transform:scaleX(0.9464);">Rbs</span>
<span class="t" style="left:783.30px;top:289.00px;font-size:12px;transform:scaleX(0.9244);">rbs_Run02_Img01....</span>
<span class="t" style="left:897.30px;top:289.00px;font-size:12px;transform:scaleX(0.9464);">Rbs</span>
<span class="t" style="left:783.30px;top:309.00px;font-size:12px;transform:scaleX(0.9244);">rbs_Run03_Img01....</span>
<span class="t" style="left:897.30px;top:309.00px;font-size:12px;transform:scaleX(0.9464);">Rbs</span>
<span class="t" style="left:783.30px;top:329.00px;font-size:12px;transform:scaleX(0.9244);">rbs_Run04_Img01....</span>
<span class="t" style="left:897.30px;top:329.00px;font-size:12px;transform:scaleX(0.9464);">Rbs</span>
<span class="t" style="left:783.30px;top:349.00px;font-size:12px;transform:scaleX(0.9244);">rbs_Run05_Img01....</span>
<span class="t" style="left:897.30px;top:349.00px;font-size:12px;transform:scaleX(0.9464);">Rbs</span>
<span class="t" style="left:783.30px;top:369.00px;font-size:12px;transform:scaleX(0.9368);">vrb_Run01_Img01....</span>
<span class="t" style="left:897.30px;top:369.00px;font-size:12px;transform:scaleX(1.0600);">Vrb</span>
<span class="t" style="left:783.30px;top:389.00px;font-size:12px;transform:scaleX(0.9368);">vrb_Run02_Img01....</span>
<span class="t" style="left:897.30px;top:389.00px;font-size:12px;transform:scaleX(1.0600);">Vrb</span>
<span class="t" style="left:783.30px;top:409.00px;font-size:12px;transform:scaleX(0.9368);">vrb_Run03_Img01....</span>
<span class="t" style="left:897.30px;top:409.00px;font-size:12px;transform:scaleX(1.0600);">Vrb</span>
<span class="t" style="left:783.30px;top:429.00px;font-size:12px;transform:scaleX(0.9368);">vrb_Run04_Img01....</span>
<span class="t" style="left:897.30px;top:429.00px;font-size:12px;transform:scaleX(1.0600);">Vrb</span>
<span class="t" style="left:783.30px;top:449.00px;font-size:12px;transform:scaleX(0.9368);">vrb_Run05_Img01....</span>
<span class="t" style="left:897.30px;top:449.00px;font-size:12px;transform:scaleX(1.0600);">Vrb</span>
<span class="t" style="left:784.40px;top:609.00px;font-size:12px;transform:scaleX(0.9333);">Filter:</span>
<span class="t" style="left:828.30px;top:609.00px;font-size:12px;transform:scaleX(0.9862);">Image</span>
<span class="t" style="left:900.20px;top:609.00px;font-size:12px;color:#888;transform:scaleX(0.9693);">=</span>
</body></html>
